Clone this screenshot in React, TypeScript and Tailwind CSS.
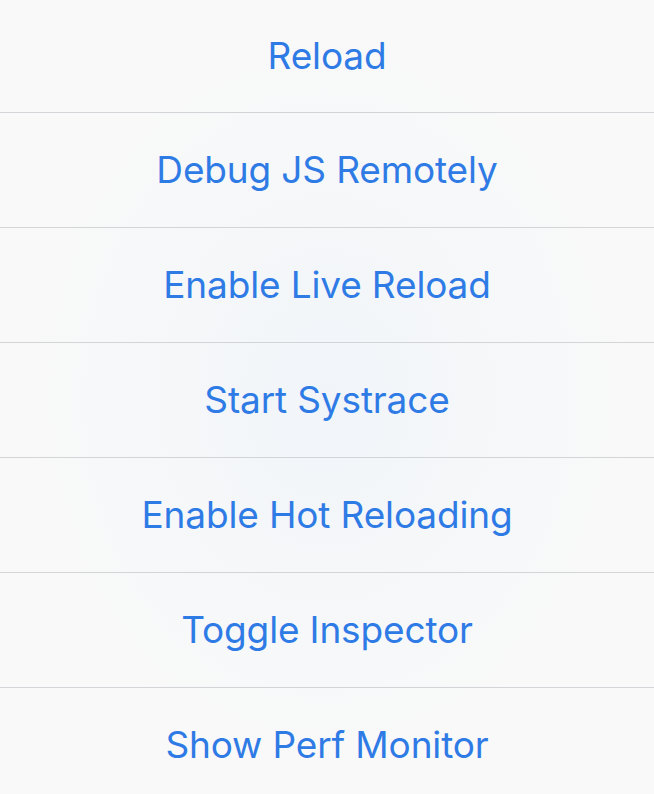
import React from "react";

const items = [
  "Reload",
  "Debug JS Remotely",
  "Enable Live Reload",
  "Start Systrace",
  "Enable Hot Reloading",
  "Toggle Inspector",
  "Show Perf Monitor",
];

export default function App() {
  return (
    <div
      className="w-[654px] h-[794px] overflow-hidden bg-[#f9f9f9] bg-[radial-gradient(ellipse_at_center,#f1f5f9_0%,#f9f9f9_65%)] flex flex-col"
      style={{ fontFamily: "Inter, 'Noto Sans', sans-serif" }}
    >
      {items.map((t, i) => (
        <div
          key={t}
          className={
            i === 0
              ? "h-[112px] shrink-0 flex items-center justify-center"
              : "h-[115px] shrink-0 flex items-center justify-center border-t border-[#d3d4d8]"
          }
        >
          <span className="text-[37px] text-[#2f7be6] tracking-[-0.15px]">{t}</span>
        </div>
      ))}
    </div>
  );
}
